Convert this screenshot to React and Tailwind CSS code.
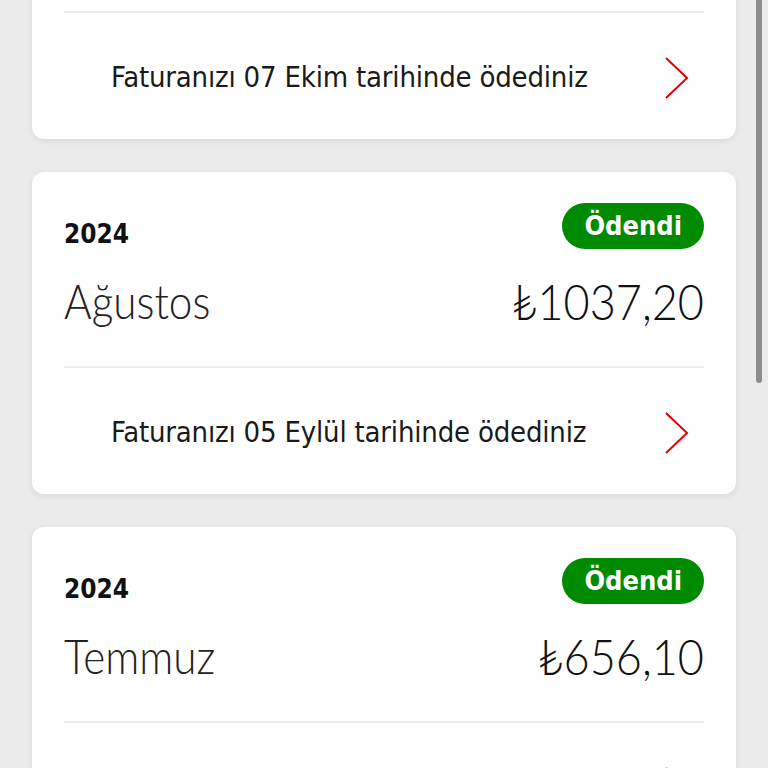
import React from "react";

const font = { fontFamily: '"DejaVu Sans Condensed", "Liberation Sans", sans-serif' };
const thin = { fontFamily: 'Lato, "DejaVu Sans Condensed", sans-serif' };

function Chevron() {
  return (
    <svg width="26" height="42" viewBox="0 0 26 42" className="shrink-0">
      <path d="M2 1 L23 21 L2 41" fill="none" stroke="#e60000" strokeWidth="2" />
    </svg>
  );
}

function Row({ text }) {
  return (
    <div className="h-[126px] flex items-center justify-between pl-[47px] pr-[14px] pt-[3px]">
      <span className="text-[29px] text-[#1a1a1a] tracking-[-0.2px]">{text}</span>
      <Chevron />
    </div>
  );
}

function Card({ month, amount, text }) {
  return (
    <div className="bg-white rounded-[12px] shadow-[0_2px_6px_rgba(0,0,0,0.08)] px-8">
      <div className="pt-[31px] flex justify-between items-start">
        <span className="mt-[12px] text-[26px] font-bold text-[#111]">2024</span>
        <span className="h-[46px] px-[22px] rounded-full bg-[#008a00] text-white text-[27px] font-bold flex items-center">Ödendi</span>
      </div>
      <div className="mt-[18px] h-[58px] flex justify-between items-center" style={thin}>
        <span className="text-[48px] font-light text-[#222] leading-none scale-x-[0.88] origin-left">{month}</span>
        <span className="text-[50px] font-light text-[#111] leading-none scale-x-[0.9] origin-right">{amount}</span>
      </div>
      <div className="mt-[36px] h-[2px] bg-[#ececec]" />
      <Row text={text} />
    </div>
  );
}

export default function App() {
  return (
    <div className="relative w-[768px] h-[768px] overflow-hidden bg-[#ebebeb]" style={font}>
      <div className="px-8 -mt-[20px] flex flex-col gap-[33px]">
        <div className="bg-white rounded-b-[12px] shadow-[0_2px_6px_rgba(0,0,0,0.08)] px-8 pt-[31px]">
          <div className="h-[2px] bg-[#ececec]" />
          <Row text="Faturanızı 07 Ekim tarihinde ödediniz" />
        </div>
        <Card month="Ağustos" amount="₺1037,20" text="Faturanızı 05 Eylül tarihinde ödediniz" />
        <Card month="Temmuz" amount="₺656,10" text="Faturanızı 05 Ağustos tarihinde ödediniz" />
      </div>
      <div className="absolute right-[6px] top-0 w-[6px] h-[383px] bg-[#8d8d8d] rounded-b-[3px]" />
    </div>
  );
}
